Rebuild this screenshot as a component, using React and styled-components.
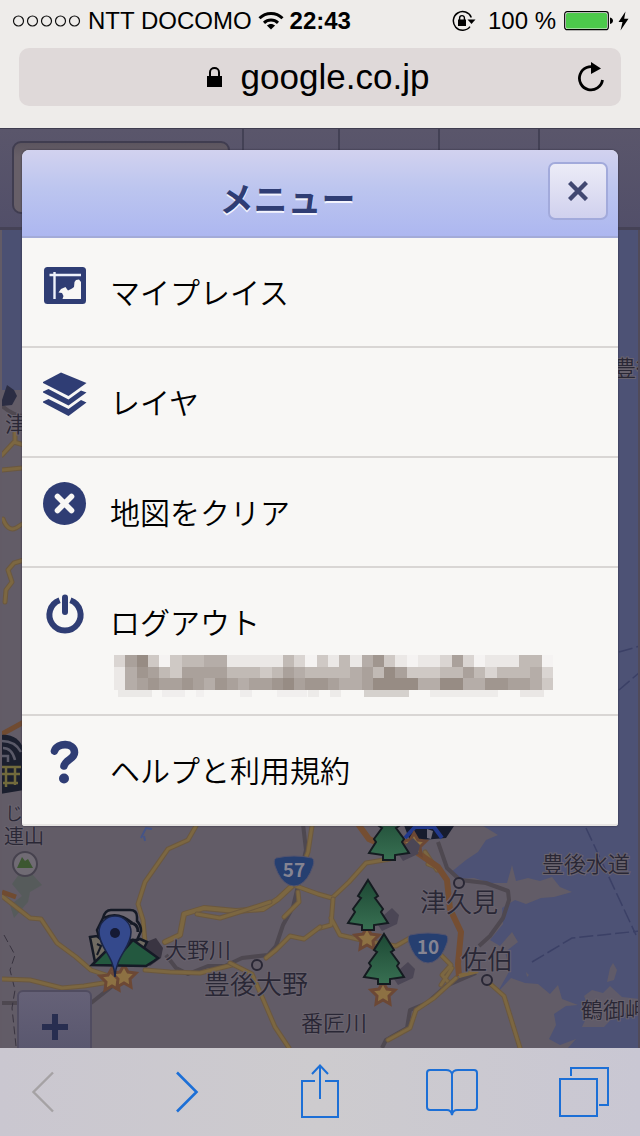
import React from "react";
import styled, { createGlobalStyle } from "styled-components";

const sans = `"Liberation Sans", "Noto Sans CJK JP", sans-serif`;
const japanese = `"Noto Sans CJK JP", "Liberation Sans", sans-serif`;
const navy = "#2f3d74";
const blue = "#1c6fd6";
const sheet = "#f8f7f5";

const GlobalStyle = createGlobalStyle`
  *, *::before, *::after { box-sizing: border-box; }
  body { margin: 0; background: #eeecea; font-family: ${sans}; color: #000; }
  button, input { font: inherit; color: inherit; margin: 0; padding: 0; border: 0; background: none; }
  button { cursor: pointer; }
  svg { display: block; }
`;

const Screen = styled.div`
  display: flex;
  flex-direction: column;
  min-height: 100vh;
`;

/* Browser chrome */
const Chrome = styled.header`
  height: 128px;
  padding: 0 19px;
  background: #eeecea;
`;

const StatusBar = styled.div`
  display: flex;
  align-items: center;
  justify-content: space-between;
  height: 48px;
  padding: 0 0 6px;
  margin: 0 -8px 0 -7px;
  font-size: 24px;
  line-height: 28px;
  white-space: nowrap;
`;

const StatusGroup = styled.div`
  display: flex;
  align-items: center;
  gap: ${(p) => p.$gap}px;
`;

const Clock = styled.time`
  font-weight: 700;
`;

const AddressBar = styled.div`
  display: grid;
  grid-template-columns: 56px 1fr 60px;
  align-items: center;
  height: 58px;
  border-radius: 10px;
  background: #dfd9d9;
`;

const Address = styled.div`
  grid-column: 2;
  display: flex;
  align-items: center;
  justify-content: center;
  gap: 19px;
  font-size: 35px;
  line-height: 40px;
`;

const ReloadButton = styled.button`
  display: grid;
  place-items: center;
  height: 58px;
`;

/* Map page */
const MapPage = styled.main`
  position: relative;
  flex: 1;
  min-height: 920px;
  padding: 0 22px;
  overflow: hidden;
  background: #625c67;
`;

const MapLayer = styled.div`
  position: absolute;
  inset: 0;
  svg { width: 100%; height: 100%; }
  text { font-family: ${japanese}; }
`;

const SearchStrip = styled.div`
  position: absolute;
  inset: 0 0 auto 0;
  display: grid;
  grid-template-columns: 242px 96px 100px 100px 1fr;
  height: 102px;
  border-top: 1px solid #3f3d50;
  border-bottom: 3px solid #454256;
  background: linear-gradient(#5a566b, #524f69);
`;

const SearchCell = styled.div`
  padding: 12px;
`;

const SearchField = styled.input`
  display: block;
  width: 218px;
  height: 73px;
  border: 2px solid #403d50;
  border-radius: 9px;
  background: linear-gradient(#5c555f, #675f68 20%);
`;

const StripButton = styled.button`
  border-left: 2px solid #434155;
`;

const ZoomButton = styled.button`
  position: absolute;
  left: 17px;
  bottom: -16px;
  display: grid;
  place-items: center;
  width: 75px;
  height: 74px;
  border: 2px solid #504c60;
  border-radius: 6px;
  background: linear-gradient(#656177, #57556d);
`;

const Dialog = styled.section`
  position: relative;
  margin-top: 22px;
  border-radius: 7px 7px 3px 3px;
  background: ${sheet};
  box-shadow: 0 0 2px #2b293c;
`;

const DialogHeader = styled.div`
  display: flex;
  align-items: flex-start;
  height: 88px;
  padding: 12px 10px 0 5px;
  border-bottom: 2px solid #a3abd8;
  border-radius: 7px 7px 0 0;
  background: linear-gradient(#d2d2ef, #bcc5ef 45%, #adb7f0);
`;

const DialogTitle = styled.h1`
  flex: 1;
  margin: 11px 0 0;
  text-align: center;
  font-family: ${japanese};
  font-size: 34px;
  font-weight: 700;
  line-height: 50px;
  color: ${navy};
  text-shadow: 0 2px 0 #f2f3fd;
`;

const CloseButton = styled.button`
  display: grid;
  place-items: center;
  width: 60px;
  height: 58px;
  border: 2px solid #a2aadb;
  border-radius: 7px;
  background: linear-gradient(#ececf7, #d0d1ee);
`;

const Menu = styled.ul`
  margin: 0;
  padding: 0;
  list-style: none;
`;

const MenuItem = styled.li`
  border-bottom: 2px solid #d9d6d4;
  &:last-child { border-bottom-color: #e7e5e3; border-radius: 3px; }
`;

const MenuButton = styled.button`
  display: flex;
  align-items: flex-start;
  gap: 23px;
  width: 100%;
  min-height: ${(p) => (p.$tall ? 146 : 108)}px;
  padding: 24px 21px 0;
  text-align: left;
`;

const MenuBody = styled.span`
  display: flex;
  flex-direction: column;
  gap: 14px;
  padding-top: 9px;
`;

const MenuLabel = styled.span`
  font-family: ${japanese};
  font-size: 30px;
  font-weight: 350;
  line-height: 40px;
`;

const MaskedAccount = styled.svg`
  margin-left: 4px;
`;

/* Bottom toolbar */
const Toolbar = styled.nav`
  display: flex;
  align-items: center;
  justify-content: space-between;
  height: 88px;
  padding: 0 28px 0 3px;
  background: linear-gradient(90deg, #cac7d0, #cdcbce 50%, #c9c7d3);
`;

const ToolButton = styled.button`
  display: grid;
  place-items: center;
  width: ${(p) => (p.$wide ? 80 : 56)}px;
  height: 88px;
`;

/* Status icons */
const SignalIcon = () => (
  <svg width="70" height="14" viewBox="0 0 70 14" fill="none" stroke="#111" strokeWidth="1.2">
    {[0, 1, 2, 3, 4].map((i) => <circle key={i} cx={6.5 + i * 14} cy="7" r="5" />)}
  </svg>
);

const WifiIcon = () => (
  <svg width="26" height="20" viewBox="0 0 26 20" fill="none" stroke="#000" strokeWidth="3">
    <path d="M1.5 7.3 C8 0.8 18 0.8 24.5 7.3" />
    <path d="M6 11.8 C10 8 16 8 20 11.8" />
    <path d="M13 18.5 L8.9 14.5 C11.2 12.4 14.8 12.4 17.1 14.5 Z" fill="#000" stroke="none" />
  </svg>
);

const RotationLockIcon = () => (
  <svg width="24" height="22" viewBox="0 0 24 22" fill="none" stroke="#000">
    <path d="M19.3 7.5 A9.3 9.3 0 1 0 18 16.6" strokeWidth="1.5" />
    <path d="M15.5 9.5 H23.5 L19.5 14 Z" fill="#000" stroke="none" />
    <rect x="6" y="9.5" width="8" height="6.5" fill="#000" stroke="none" />
    <path d="M7.6 10 V8 a2.4 2.4 0 0 1 4.8 0 V10" strokeWidth="1.4" />
  </svg>
);

const BatteryIcon = () => (
  <svg width="50" height="20" viewBox="0 0 50 20">
    <rect x="0.7" y="0.7" width="43.6" height="18" rx="2.5" fill="#f5f5f3" stroke="#000" strokeWidth="1.2" />
    <rect x="2" y="2" width="41" height="15.4" rx="1.5" fill="#4cc94b" />
    <path d="M46 6.5 C50 7.5 50 12 46 13 Z" fill="#000" />
  </svg>
);

const BoltIcon = () => (
  <svg width="11" height="20" viewBox="0 0 11 20">
    <path d="M7.5 0.5 L0.5 11 H4.5 L2.5 19.5 L10.5 7.8 H6.2 Z" />
  </svg>
);

const LockIcon = () => (
  <svg width="15" height="20" viewBox="0 0 15 20">
    <rect y="9" width="15" height="11" />
    <path d="M3 10 V5.2 a4.5 4.2 0 0 1 9 0 V10" fill="none" stroke="#000" strokeWidth="2" />
  </svg>
);

const ReloadIcon = () => (
  <svg width="28" height="32" viewBox="0 0 28 32">
    <path d="M19 6.8 A11.6 11.6 0 1 0 25.5 19" fill="none" stroke="#000" strokeWidth="2.8" />
    <path d="M14 1 L24 7.5 L14 13 Z" />
  </svg>
);

/* Menu icons, all on a 44 x 44 grid */
const MenuIcon = ({ children }) => (
  <svg width="44" height="44" viewBox="0 0 44 44" fill={navy}>{children}</svg>
);

const MyPlacesIcon = () => (
  <MenuIcon>
    <rect x="1" y="5" width="42" height="37" rx="3.5" />
    <path d="M6.5 13 H38 M11.5 10 V37" stroke="#eef1fb" strokeWidth="2.4" fill="none" />
    <path d="M19.5 37 L20.5 34 L19 31 L15.5 30.5 L18 27 L22.5 25 L23.5 26.5 L25 28.5 L29 26.5 L31 25 L31.5 20 L33 18 L36 17.5 L38 20 V37 Z" fill={sheet} />
  </MenuIcon>
);

const LayersIcon = () => (
  <MenuIcon>
    <path d="M18 0.5 L43.5 11 L25.5 24 L-1 10.5 Z" />
    <path d="M-1 20 L5.5 17 L25.5 27.5 L38 18.5 L43.5 20.5 L25.5 33.5 Z" />
    <path d="M-1 30 L5.5 27 L25.5 37 L38 28 L43.5 30.5 L25.5 44 Z" />
  </MenuIcon>
);

const ClearIcon = () => (
  <MenuIcon>
    <circle cx="21.5" cy="21.5" r="21.5" />
    <path d="M14.5 14.5 L28.5 28.5 M28.5 14.5 L14.5 28.5" stroke={sheet} strokeWidth="5.6" strokeLinecap="round" />
  </MenuIcon>
);

const PowerIcon = () => (
  <MenuIcon>
    <path d="M16.6 8.3 A15.6 15.6 0 1 0 27.4 8.3" fill="none" stroke={navy} strokeWidth="6" />
    <path d="M22 5.5 V20" stroke={navy} strokeWidth="6" strokeLinecap="round" />
  </MenuIcon>
);

const HelpIcon = () => (
  <MenuIcon>
    <path d="M11.5 11 C14 2.5 31.5 2 31.5 12.5 C31.5 19 22.5 19.5 21 26" fill="none" stroke={navy} strokeWidth="7.6" strokeLinecap="round" />
    <circle cx="21" cy="38.5" r="5" />
  </MenuIcon>
);

/* Pixelated account name: one digit of darkness for each block */
const mosaic = [
  "268303445511111420314157310112620111440",
  "157643666644434654444564863334464244452",
  "156766765765667867765568888558855776653",
];
const mosaicTail = [
  [4, 34, "#ebe9e7"], [48, 23, "#f0eeed"], [82, 8, "#f2f0ef"], [126, 12, "#efedec"], [163, 30, "#f1efee"],
  [194, 11, "#edebe9"], [216, 11, "#edebe9"], [250, 45, "#d5d1cd"], [316, 68, "#eeecea"], [406, 24, "#eae7e5"],
];
const shades = ["#f5f3f2", "#ebe8e6", "#dad5d2", "#cfc9c5", "#c1bab5", "#b5ada8", "#aaa19b", "#a0968f", "#978c84"];

const Mosaic = () => (
  <MaskedAccount width="440" height="42" viewBox="0 0 440 42" shapeRendering="crispEdges" role="img" aria-label="アカウント">
    {mosaic.map((line, row) =>
      [...line].map((level, col) => (
        <rect key={`${row}-${col}`} x={col * 11.25} y={row * 11.67} width="11.5" height="12" fill={shades[level]} />
      ))
    )}
    {mosaicTail.map(([x, width, fill]) => <rect key={x} x={x} y="35" width={width} height="7" fill={fill} />)}
  </MaskedAccount>
);

/* Map drawing */
const Road = ({ d, w = 5 }) => (
  <g fill="none" strokeLinejoin="round" strokeLinecap="round">
    <path d={d} stroke="#6b583f" strokeWidth={w} />
    <path d={d} stroke="#7c6741" strokeWidth={w - 2} />
  </g>
);

const Shield = ({ x, y, children }) => (
  <g transform={`translate(${x} ${y})`}>
    <path d="M-18 -13 Q0 -17 18 -13 Q21 -11 19 -5 Q14 10 5 14 Q0 16 -5 14 Q-14 10 -19 -5 Q-21 -11 -18 -13 Z" fill="#263f70" stroke="#52536e" />
    <text y="6" textAnchor="middle" fontSize="19" fontWeight="700" fill="#858492">{children}</text>
  </g>
);

const Star = ({ x, y }) => (
  <path
    transform={`translate(${x} ${y})`}
    d="M0 -11 L4 -4 L12 -3 L6 3 L7 11 L0 7 L-7 11 L-6 3 L-12 -3 L-4 -4 Z"
    fill="#8d7143" stroke="#6c4835" strokeWidth="3"
  />
);

const Tree = ({ x, y }) => (
  <g transform={`translate(${x} ${y})`}>
    <path d="M8 42 L24 28 L31 35 L29 44 L14 51 Z" fill="#4b4655" />
    <path
      d="M0 0 L10 16 L7 18 L15 29 L13 32 L20 43 L6 45 V50 H-6 V45 L-20 43 L-13 32 L-15 29 L-7 18 L-10 16 Z"
      fill="url(#tree)" stroke="#141b20" strokeWidth="2"
    />
  </g>
);

const Place = ({ x, y, size = 22, children }) => (
  <text x={x} y={y} fontSize={size} fontWeight="350" fill="#292735" stroke="#69636e" strokeWidth="2" paintOrder="stroke">{children}</text>
);

const MapDrawing = () => (
  <svg viewBox="0 128 640 920" preserveAspectRatio="xMidYMax slice">
    <defs>
      <linearGradient id="tree" x1="0" y1="0" x2="0" y2="1">
        <stop offset="0" stopColor="#1d4834" />
        <stop offset="1" stopColor="#387052" />
      </linearGradient>
    </defs>
    <rect y="128" width="640" height="920" fill="#625c67" />
    <rect y="128" width="24" height="262" fill="#4b5072" />
    <path
      d="M600 128 H640 V1048 H568 L576 1039 L560 1045 L549 1039 L556 1025 L554 1014 L566 1006 L578 1005 L562 999 L558 985 L550 994 L538 984 L525 983 L511 978 L497 993 L510 970 L505 952 L518 942 L512 932 L500 946 L490 940 L503 924 L502 908 L515 900 L526 904 L541 898 L554 897 L572 892 L560 887 L552 877 L540 881 L528 878 L516 881 L512 865 L507 883 L490 883 L474 878 L458 879 L450 873 L466 860 L478 852 L486 840 L498 835 L480 824 H600 Z"
      fill="#4d5275"
    />
    <path d="M582 1027 L590 1010 L584 996 L592 990 L603 993 L610 986 L622 997 L640 999 V1015 L618 1012 L604 1027 Z" fill="#605b69" />
    <path d="M607 982 L610 968 L613 963 L617 970 L614 980 Z M526 972 l3 3 l-2 2 Z" fill="#605b69" />
    <path d="M12 884 L25 866 L42 885 L30 892 L28 902 L14 918 L10 905 L22 896 Z" fill="#515b57" opacity="0.7" />
    <path d="M586 828 L636 935 M532 962 L572 938 L640 931 M619 652 L640 646 M619 690 L640 672" fill="none" stroke="#3b4066" strokeWidth="1.5" strokeDasharray="14 4" />
    <path d="M141 838 L146 828 L152 829 M144 836 L145 841" stroke="#455487" strokeWidth="2" fill="none" />

    <g fill="none" stroke="#4e4850" strokeWidth="4" strokeLinejoin="round">
      <path d="M303 824 L306 850 L298 886 L293 907 L283 925 L276 946 L268 955 L242 958 L225 966 L208 966 L188 974 L176 968 L166 955" />
      <path d="M438 842 L447 868 L460 880 L486 883 L508 891 L509 900 L503 918 L490 936 L479 946" />
      <path d="M476 973 L446 986 L427 1003 L410 1010 L407 1028 L386 1040 L382 1048 M91 1003 L110 988 L124 976 M2 1003 H18" />
      <path d="M2 406 Q14 416 24 416" />
    </g>
    <path d="M4 935 L15 955 L10 970 L15 990 L12 1008 L16 1046" fill="none" stroke="#38333f" strokeDasharray="8 4" />

    <Road d="M196 826 L188 840 L168 849 L145 882 L138 904 L143 920 L145 942" />
    <Road d="M2 896 L30 918 L41 919 L57 943 L76 957 L91 970 L106 975 L122 981" />
    <Road d="M2 979 L30 980 L62 988 L84 986 L110 982 L124 975" />
    <Road d="M145 970 L170 972 L200 973 L232 965" />
    <Road d="M165 942 L180 935 L184 914 L204 908 L236 911 L263 909 L278 899 L292 886" w={6} />
    <Road d="M197 914 L220 918 L252 908 L270 902" />
    <Road d="M296 886 L318 894 L332 898 L349 882 L366 863 L390 859" />
    <Road d="M333 899 L331 925 L320 928 M331 918 L340 935 L366 941 L396 946 L410 938" />
    <Road d="M298 892 L299 902 L284 917 M320 927 L304 939 L290 936 L276 950 L266 958" />
    <Road d="M230 963 L252 974 L263 999 L275 1027 L289 1048" />
    <Road d="M312 826 L308 852 L296 884" />
    <Road d="M425 852 L437 870 M428 864 L438 868 M441 955 L451 965 L442 975 L449 983 M441 985 L452 968" />
    <Road d="M487 981 L504 996 L512 1022 L520 1048 M456 978 L434 998 L416 1010 L410 1028 L388 1040" />
    <path d="M358 824 L369 839 L389 848 L412 849 L438 867 L447 880 L450 909 L461 932 L458 964 L459 976" fill="none" stroke="#754e32" strokeWidth="6" />
    <path d="M459 976 L478 971" stroke="#7d663e" strokeWidth="4" />
    <Road d="M2 455 L14 442 L24 445 M15 442 L15 425 M2 470 L22 468" />
    <Road d="M3 519 Q8 532 16 528 L24 523 M24 560 L14 563 L8 570 L12 582 L6 590 L5 602" />
    <path d="M2 734 L24 722 M2 892 L16 897" fill="none" stroke="#704b31" strokeWidth="5" />

    <g fill="#625c67" stroke="#292735" strokeWidth="2">
      <circle cx="257" cy="965" r="5" />
      <circle cx="459" cy="883" r="5" />
      <circle cx="487" cy="980" r="5" />
    </g>

    <Place x={5} y={432}>津</Place>
    <Place x={614} y={376}>豊後</Place>
    <Place x={5} y={820} size={18}>じ</Place>
    <Place x={4} y={844} size={20}>連山</Place>
    <Place x={165} y={958}>大野川</Place>
    <Place x={204} y={994} size={26}>豊後大野</Place>
    <Place x={301} y={1031}>番匠川</Place>
    <Place x={420} y={912} size={26}>津久見</Place>
    <Place x={461} y={969} size={26}>佐伯</Place>
    <Place x={542} y={872}>豊後水道</Place>
    <Place x={581} y={1018}>鶴御岬</Place>

    <Shield x={294} y={871}>57</Shield>
    <Shield x={428} y={948}>10</Shield>

    <circle cx="25" cy="864" r="12" fill="#706b74" stroke="#46424e" strokeWidth="2" />
    <path d="M17 868 L22 857 L25 861 L28 859 L33 868 Z" fill="#3c5731" />

    <path d="M2 378 L7 363 L14 368 L17 374 L12 383 L2 384 Z" transform="translate(0 22)" fill="#2b2d43" />
    <path d="M0 735 Q18 733 24 750 V790 L0 794 Z" fill="#1b1f2e" />
    <path d="M2 741 Q15 741 21 752 M3 748 Q12 748 15 760 M2 756 H8 V762" fill="none" stroke="#5a5a68" strokeWidth="2.5" />
    <path d="M2 767 H21 M2 774 H20 M3 783 H18 M6 767 V787 M15 767 V785" fill="none" stroke="#716a3c" strokeWidth="2.5" />

    <path d="M402 820 H458 L446 838 L410 841 Z" fill="#171c2d" />
    <path d="M405 838 L415 827 H434 L442 838" fill="none" stroke="#22398c" strokeWidth="4" />
    <path d="M427 829 L433 831 L431 839 L427 838 Z" fill="#6d6a78" />
    <Star x={414} y={844} />
    <Tree x={389} y={810} />
    <Star x={367} y={938} />
    <Tree x={368} y={880} />
    <Star x={383} y={993} />
    <Tree x={384} y={934} />

    <Star x={112} y={979} />
    <Star x={124} y={976} />
    <path d="M146 942 L156 938 L163 948 L161 958 L150 966 L142 960 Z" fill="#3a3542" />
    <path d="M103 918 Q105 910 111 910 H130 Q137 910 137 917 V921 Q141 925 141 931 L137 940 H100 L97 930 Z" fill="#6d6872" stroke="#151a26" strokeWidth="2.5" />
    <path d="M104 918 Q118 911 132 923 M130 923 Q138 923 138 932" fill="none" stroke="#151a26" strokeWidth="3" />
    <path d="M90 937 L97 936 L104 942 L132 943 L140 939 L147 942 L141 954 L143 962 H95 Z" fill="#706b62" stroke="#151a26" strokeWidth="2.5" />
    <path d="M97 944 L101 946 L97 955" fill="none" stroke="#151a26" strokeWidth="2" />
    <path d="M92 965 L107 950 L119 956 L133 940 L158 958 L154 961 L146 966 Z" fill="#23583f" stroke="#151a26" strokeWidth="2.5" />
    <path d="M115 977 C114 955 99 948 99 932 A16 16 0 0 1 131 932 C131 948 116 955 115 977 Z" fill="#34498c" stroke="#1a2547" strokeWidth="1.5" />
    <circle cx="115" cy="933" r="5" fill="#151a35" />
    <rect y="128" width="2" height="920" fill="#625b66" />
    <rect x="638" y="128" width="2" height="920" fill="#514b59" />
  </svg>
);

const items = [
  { label: "マイプレイス", Icon: MyPlacesIcon },
  { label: "レイヤ", Icon: LayersIcon },
  { label: "地図をクリア", Icon: ClearIcon },
  { label: "ログアウト", Icon: PowerIcon, account: true },
  { label: "ヘルプと利用規約", Icon: HelpIcon },
];

export default function App() {
  return (
    <Screen>
      <GlobalStyle />
      <Chrome>
        <StatusBar>
          <StatusGroup $gap={6}>
            <SignalIcon />
            <span>NTT DOCOMO</span>
            <WifiIcon />
            <Clock>22:43</Clock>
          </StatusGroup>
          <StatusGroup $gap={8}>
            <StatusGroup $gap={12}>
              <RotationLockIcon />
              <span>100 %</span>
            </StatusGroup>
            <StatusGroup $gap={4}>
              <BatteryIcon />
              <BoltIcon />
            </StatusGroup>
          </StatusGroup>
        </StatusBar>
        <AddressBar>
          <Address>
            <LockIcon />
            <span>google.co.jp</span>
          </Address>
          <ReloadButton aria-label="再読み込み"><ReloadIcon /></ReloadButton>
        </AddressBar>
      </Chrome>

      <MapPage>
        <MapLayer><MapDrawing /></MapLayer>
        <SearchStrip>
          <SearchCell><SearchField type="text" aria-label="検索" /></SearchCell>
          <StripButton aria-label="検索する" />
          <StripButton aria-label="経路" />
          <StripButton aria-label="現在地" />
          <StripButton aria-label="メニューを開く" />
        </SearchStrip>
        <ZoomButton aria-label="拡大">
          <svg width="26" height="26" viewBox="0 0 26 26"><path d="M13 0 V26 M0 13 H26" stroke="#282e50" strokeWidth="6" /></svg>
        </ZoomButton>

        <Dialog role="dialog" aria-labelledby="menu-title">
          <DialogHeader>
            <DialogTitle id="menu-title">メニュー</DialogTitle>
            <CloseButton aria-label="閉じる">
              <svg width="20" height="20" viewBox="0 0 20 20"><path d="M1.5 1.5 L18.5 18.5 M18.5 1.5 L1.5 18.5" stroke="#414872" strokeWidth="4.4" /></svg>
            </CloseButton>
          </DialogHeader>
          <Menu>
            {items.map(({ label, Icon, account }) => (
              <MenuItem key={label}>
                <MenuButton $tall={account}>
                  <Icon />
                  <MenuBody>
                    <MenuLabel>{label}</MenuLabel>
                    {account && <Mosaic />}
                  </MenuBody>
                </MenuButton>
              </MenuItem>
            ))}
          </Menu>
        </Dialog>
      </MapPage>

      <Toolbar aria-label="ブラウザ">
        <ToolButton $wide aria-label="戻る">
          <svg width="24" height="42" viewBox="0 0 24 42" fill="none" stroke="#a5a2a4" strokeWidth="2.4"><path d="M22 1.5 L2.5 21 L22 40.5" /></svg>
        </ToolButton>
        <ToolButton aria-label="進む">
          <svg width="24" height="42" viewBox="0 0 24 42" fill="none" stroke={blue} strokeWidth="2.6"><path d="M2 1.5 L21.5 21 L2 40.5" /></svg>
        </ToolButton>
        <ToolButton aria-label="共有">
          <svg width="40" height="58" viewBox="0 0 40 58" fill="none" stroke={blue} strokeWidth="2">
            <path d="M15 18 H2 V54 H38 V18 H25 M20 36 V2 M12 11 L20 2.5 L28 11" />
          </svg>
        </ToolButton>
        <ToolButton aria-label="ブックマーク">
          <svg width="54" height="48" viewBox="0 0 54 48" fill="none" stroke={blue} strokeWidth="2">
            <path d="M27 6 Q26 2 21 2 H5 Q2 2 2 5 V39 Q2 42 5 42 H22 Q26 42 27 47 Q28 42 32 42 H49 Q52 42 52 39 V5 Q52 2 49 2 H33 Q28 2 27 6 V46" />
          </svg>
        </ToolButton>
        <ToolButton aria-label="タブ">
          <svg width="50" height="50" viewBox="0 0 50 50" fill="none" stroke={blue} strokeWidth="2">
            <path d="M1 12 H38 V49 H1 Z M12 9 V1 H49 V38 H40" />
          </svg>
        </ToolButton>
      </Toolbar>
    </Screen>
  );
}
